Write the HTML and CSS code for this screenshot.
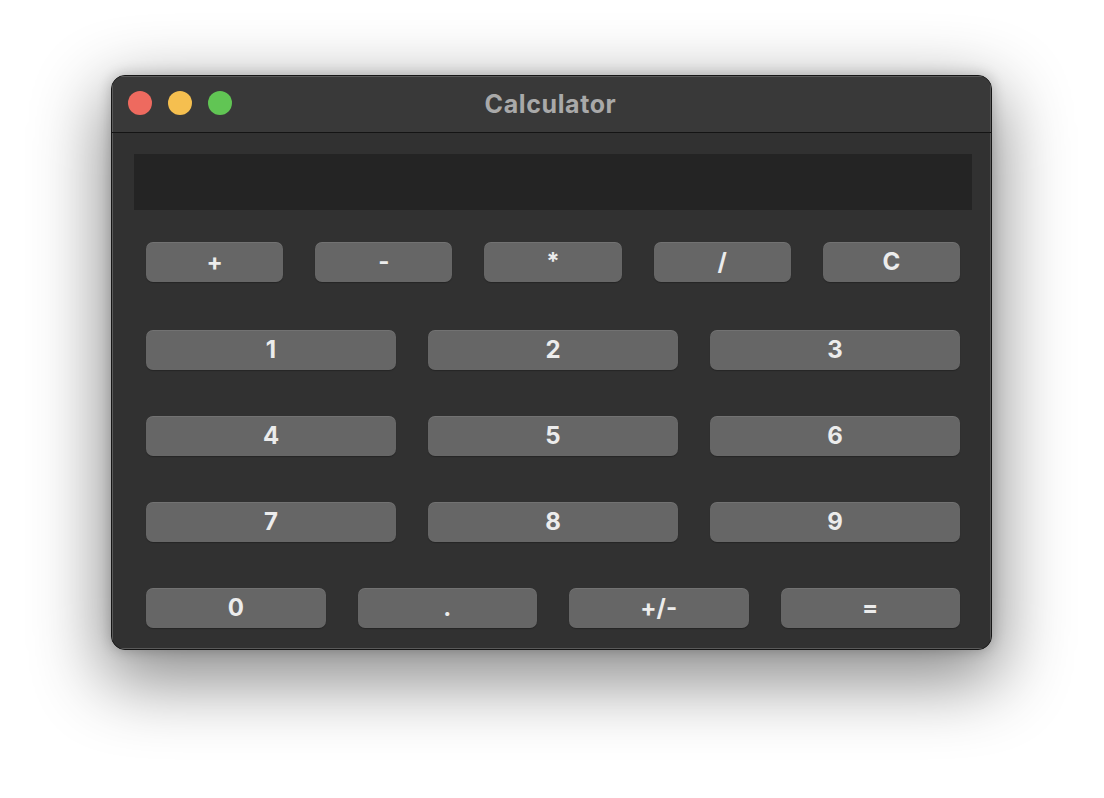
FILE: index.html
```html
<!DOCTYPE html>
<html>
<head>
<meta charset="utf-8">
<link rel="stylesheet" href="styles.css">
</head>
<body>
<div class="window">
  <div class="titlebar">
    <div class="lights">
      <span class="light red"></span>
      <span class="light yellow"></span>
      <span class="light green"></span>
    </div>
    <div class="title">Calculator</div>
  </div>
  <div class="content">
    <div class="display"></div>
    <div class="keys">
      <div class="row row-ops">
        <button class="key">+</button>
        <button class="key">-</button>
        <button class="key">*</button>
        <button class="key">/</button>
        <button class="key">C</button>
      </div>
      <div class="row">
        <button class="key">1</button>
        <button class="key">2</button>
        <button class="key">3</button>
      </div>
      <div class="row">
        <button class="key">4</button>
        <button class="key">5</button>
        <button class="key">6</button>
      </div>
      <div class="row">
        <button class="key">7</button>
        <button class="key">8</button>
        <button class="key">9</button>
      </div>
      <div class="row">
        <button class="key">0</button>
        <button class="key">.</button>
        <button class="key">+/-</button>
        <button class="key">=</button>
      </div>
    </div>
  </div>
</div>
</body>
</html>
```

FILE: styles.css
```css
html, body {
  margin: 0;
  padding: 0;
  background: #ffffff;
}

body {
  box-sizing: border-box;
  min-height: 798px;
  padding: 75px 0 0 111px;
  font-family: Inter, "Liberation Sans", sans-serif;
}

.window {
  width: 879px;
  height: 573px;
  border: 1px solid #161616;
  border-radius: 14px;
  background: #313131;
  box-shadow: 0 24px 70px 8px rgba(0, 0, 0, 0.45), 0 0 14px rgba(0, 0, 0, 0.22);
  overflow: hidden;
  display: flex;
  flex-direction: column;
}

.titlebar {
  height: 56px;
  background: #393939;
  border-bottom: 1px solid #141414;
  position: relative;
  display: flex;
  align-items: center;
  justify-content: center;
  box-shadow: inset 0 1px 0 #5a5a5a, inset 1px 0 0 #5a5a5a, inset -1px 0 0 #5a5a5a;
}

.lights {
  position: absolute;
  left: 16px;
  top: 15px;
  display: flex;
  gap: 16px;
}

.light {
  width: 24px;
  height: 24px;
  border-radius: 50%;
  display: block;
}
.red { background: #ee6a5f; }
.yellow { background: #f5bf4f; }
.green { background: #61c554; }

.title {
  color: #a9a9a9;
  font-weight: 700;
  font-size: 25px;
  letter-spacing: 0.6px;
  margin-right: 2px;
}

.content {
  flex: 1;
  display: flex;
  flex-direction: column;
  padding: 21px 19px 0 22px;
  box-shadow: inset 1px 0 0 #5a5a5a, inset -1px 0 0 #5a5a5a, inset 0 -1px 0 #5a5a5a;
}

.display {
  height: 56px;
  background: #242424;
}

.keys {
  display: flex;
  flex-direction: column;
  gap: 46px;
  padding: 32px 12px 0 12px;
}

.keys .row:first-child {
  margin-bottom: 2px;
}

.row {
  display: flex;
  gap: 32px;
}

.key {
  flex: 1;
  height: 40px;
  border: none;
  border-radius: 7px;
  background: #666666;
  color: #ececec;
  font-family: Inter, "Liberation Sans", sans-serif;
  font-weight: 700;
  font-size: 24px;
  line-height: 40px;
  padding: 0;
  box-shadow: inset 0 1px 0 rgba(255,255,255,0.08), 0 1px 1px rgba(0,0,0,0.25);
}
```
